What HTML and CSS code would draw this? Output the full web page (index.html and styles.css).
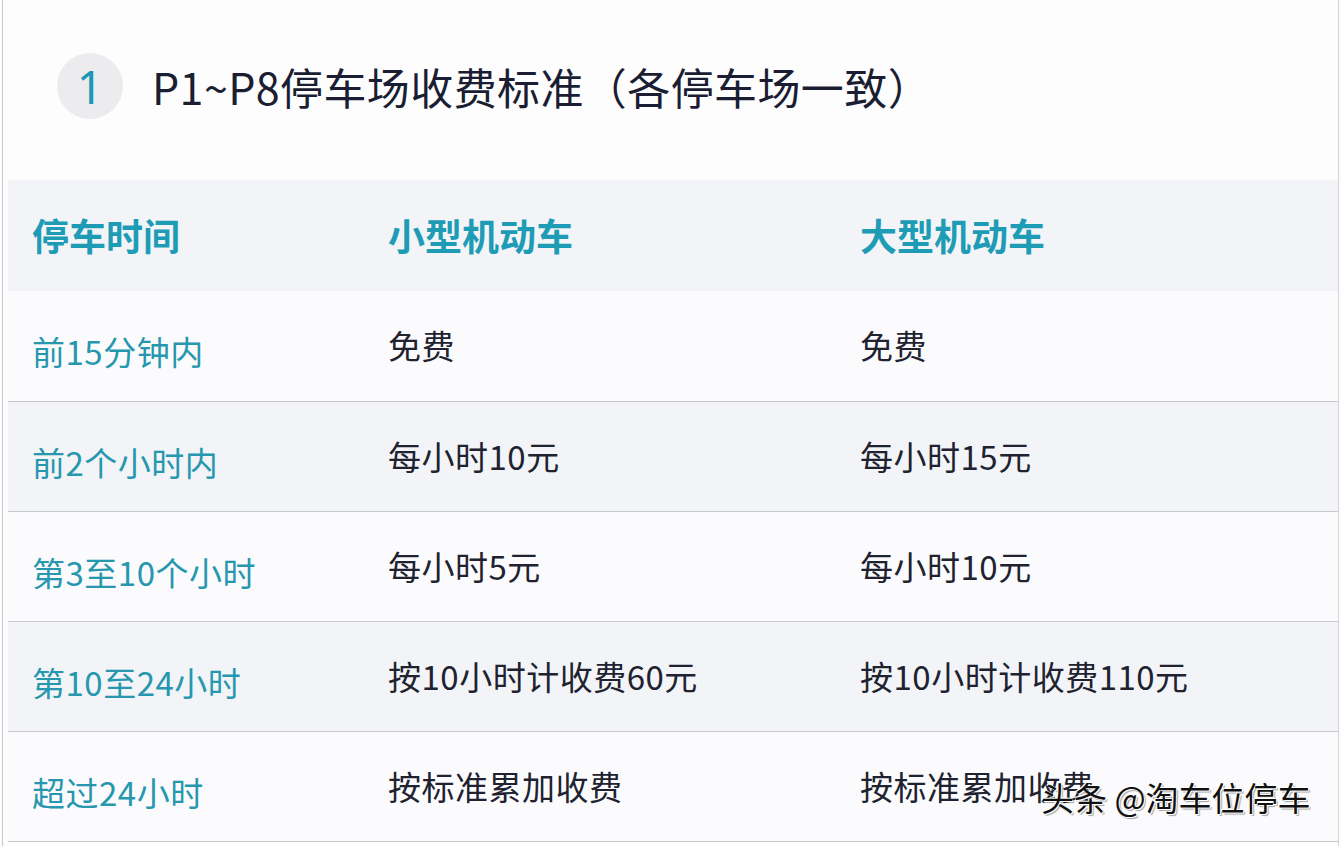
FILE: index.html
```html
<!DOCTYPE html>
<html lang="zh-CN">
<head>
<meta charset="utf-8">
<title>P1~P8停车场收费标准</title>
<link rel="stylesheet" href="styles.css">
</head>
<body>
<div class="page">
  <div class="title-block">
    <div class="num">1</div>
    <h1 class="title">P1~P8停车场收费标准（各停车场一致）</h1>
  </div>
  <div class="table">
    <div class="row head">
      <div class="cell c1">停车时间</div>
      <div class="cell">小型机动车</div>
      <div class="cell">大型机动车</div>
    </div>
    <div class="row">
      <div class="cell c1">前15分钟内</div>
      <div class="cell">免费</div>
      <div class="cell">免费</div>
    </div>
    <div class="row alt">
      <div class="cell c1">前2个小时内</div>
      <div class="cell">每小时10元</div>
      <div class="cell">每小时15元</div>
    </div>
    <div class="row">
      <div class="cell c1">第3至10个小时</div>
      <div class="cell">每小时5元</div>
      <div class="cell">每小时10元</div>
    </div>
    <div class="row alt">
      <div class="cell c1">第10至24小时</div>
      <div class="cell">按10小时计收费60元</div>
      <div class="cell">按10小时计收费110元</div>
    </div>
    <div class="row">
      <div class="cell c1">超过24小时</div>
      <div class="cell">按标准累加收费</div>
      <div class="cell">按标准累加收费</div>
    </div>
  </div>
  <div class="watermark">头条 @淘车位停车</div>
</div>
</body>
</html>
```

FILE: styles.css
```css
html, body {
  margin: 0;
  padding: 0;
  background: #fdfdfe;
}
body {
  width: 1342px;
  height: 846px;
  overflow: hidden;
  font-family: "Noto Sans CJK SC", "Noto Sans", sans-serif;
}
.page {
  position: relative;
  margin-left: 2px;
  width: 1337px;
  height: 846px;
  border-left: 1px solid #c9c9cc;
  border-right: 1px solid #d4d4d8;
  box-sizing: border-box;
  padding-left: 5px;
}
.title-block {
  height: 180px;
  display: flex;
  align-items: center;
  padding-left: 49px;
  box-sizing: border-box;
  padding-bottom: 8px;
}
.num {
  width: 66px;
  height: 66px;
  border-radius: 50%;
  background: #ececee;
  color: #1b98b3;
  font-size: 46px;
  font-weight: 400;
  display: flex;
  align-items: center;
  justify-content: center;
  line-height: 1;
  font-family: "Noto Sans", sans-serif;
}
.title {
  margin: 0 0 0 29px;
  font-size: 43px;
  font-weight: 400;
  letter-spacing: 0.4px;
  color: #1b1e33;
  line-height: 1;
}
.table {
  width: 1330px;
}
.row {
  display: grid;
  grid-template-columns: 380px 472px 1fr;
  height: 110px;
  box-sizing: border-box;
  align-items: center;
  border-bottom: 1px solid #c9c9cd;
  background: #fbfbfd;
  font-size: 33px;
  letter-spacing: 0.5px;
  color: #20222f;
}
.row.alt {
  background: #f3f4f7;
}
.row.head {
  height: 111px;
  border-bottom: none;
  background: #f2f4f8;
  font-size: 37px;
  letter-spacing: 0;
  font-weight: 700;
  color: #1e9cb5;
}
.row.head + .row {
  height: 111px;
}
.cell {
  line-height: 1.2;
  white-space: nowrap;
}
.c1 {
  padding-left: 24px;
}
.row:not(.head) .c1 {
  color: #2697ae;
  padding-top: 12px;
}
.watermark {
  position: absolute;
  left: 1038px;
  top: 778px;
  font-size: 33px;
  color: #111;
  line-height: 1.2;
  text-shadow: 1px 1px 0 #fff, -1px -1px 0 #fff, 2px 2px 1px rgba(0,0,0,0.35);
  white-space: nowrap;
}
```
